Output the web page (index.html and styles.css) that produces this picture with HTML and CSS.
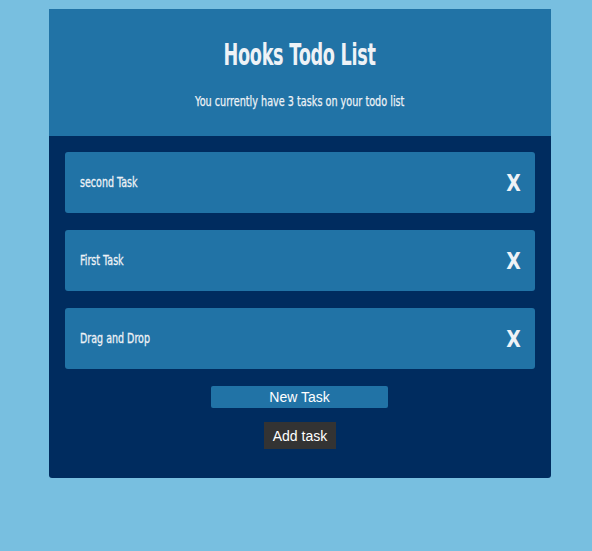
FILE: index.html
```html
<!DOCTYPE html>
<html>
<head>
<meta charset="utf-8">
<link rel="stylesheet" href="styles.css">
</head>
<body>
<div class="app">
  <header class="header">
    <h1 class="title"><span class="squeeze">Hooks Todo List</span></h1>
    <p class="subtitle"><span class="squeeze">You currently have 3 tasks on your todo list</span></p>
  </header>
  <main class="body">
    <div class="task"><span class="task-name">second Task</span><span class="remove">X</span></div>
    <div class="task"><span class="task-name">First Task</span><span class="remove">X</span></div>
    <div class="task"><span class="task-name">Drag and Drop</span><span class="remove">X</span></div>
    <form class="add-form">
      <input class="task-input" type="text" value="New Task">
      <button class="add-btn" type="button">Add task</button>
    </form>
  </main>
</div>
</body>
</html>
```
FILE: styles.css
```css
html, body {
  margin: 0;
  padding: 0;
}
body {
  background: #78bfe0;
  height: 551px;
  padding-top: 9px;
  box-sizing: border-box;
}
.app {
  width: 502px;
  margin: 0 0 0 49px;
  border-radius: 0 0 3px 3px;
  overflow: hidden;
  font-family: "DejaVu Sans", sans-serif;
}
.squeeze {
  display: inline-block;
  white-space: nowrap;
}
.header {
  background: #2173a6;
  height: 127px;
  box-sizing: border-box;
  padding-top: 27px;
  text-align: center;
  color: #eef2f6;
}
.title {
  margin: 0;
  font-size: 31px;
  font-weight: bold;
  line-height: 36px;
  letter-spacing: -0.5px;
}
.title .squeeze {
  transform: scaleX(0.57);
}
.subtitle {
  margin: 21px 0 0;
  font-size: 14px;
  line-height: 16px;
  -webkit-text-stroke: 0.25px #eef2f6;
}
.subtitle .squeeze {
  transform: scaleX(0.69);
}
.body {
  background: #002c5f;
  padding: 16px 16px 29px;
  display: flex;
  flex-direction: column;
  gap: 17px;
}
.task {
  background: #2173a6;
  height: 61px;
  border-radius: 3px;
  display: flex;
  align-items: center;
  justify-content: space-between;
  padding: 0 14px 0 15px;
  color: #eef2f6;
}
.task-name {
  display: inline-block;
  white-space: nowrap;
  font-size: 14px;
  -webkit-text-stroke: 0.3px #eef2f6;
  transform: scaleX(0.68);
  transform-origin: left center;
  position: relative;
  top: -1px;
}
.remove {
  display: inline-block;
  font-size: 23px;
  font-weight: bold;
  transform: scaleX(0.82);
  transform-origin: right center;
}
.add-form {
  display: flex;
  flex-direction: column;
  align-items: center;
  gap: 14px;
}
.task-input {
  width: 177px;
  height: 22px;
  box-sizing: border-box;
  border: none;
  border-radius: 2px;
  background: #2173a6;
  color: #fff;
  text-align: center;
  font-family: "Liberation Sans", Arial, sans-serif;
  font-size: 14px;
  padding: 0;
  margin-right: 1px;
}
.add-btn {
  background: #333333;
  color: #fff;
  border: none;
  border-radius: 0;
  font-family: "Liberation Sans", Arial, sans-serif;
  font-size: 14px;
  height: 27px;
  padding: 0 9px;
}
```
